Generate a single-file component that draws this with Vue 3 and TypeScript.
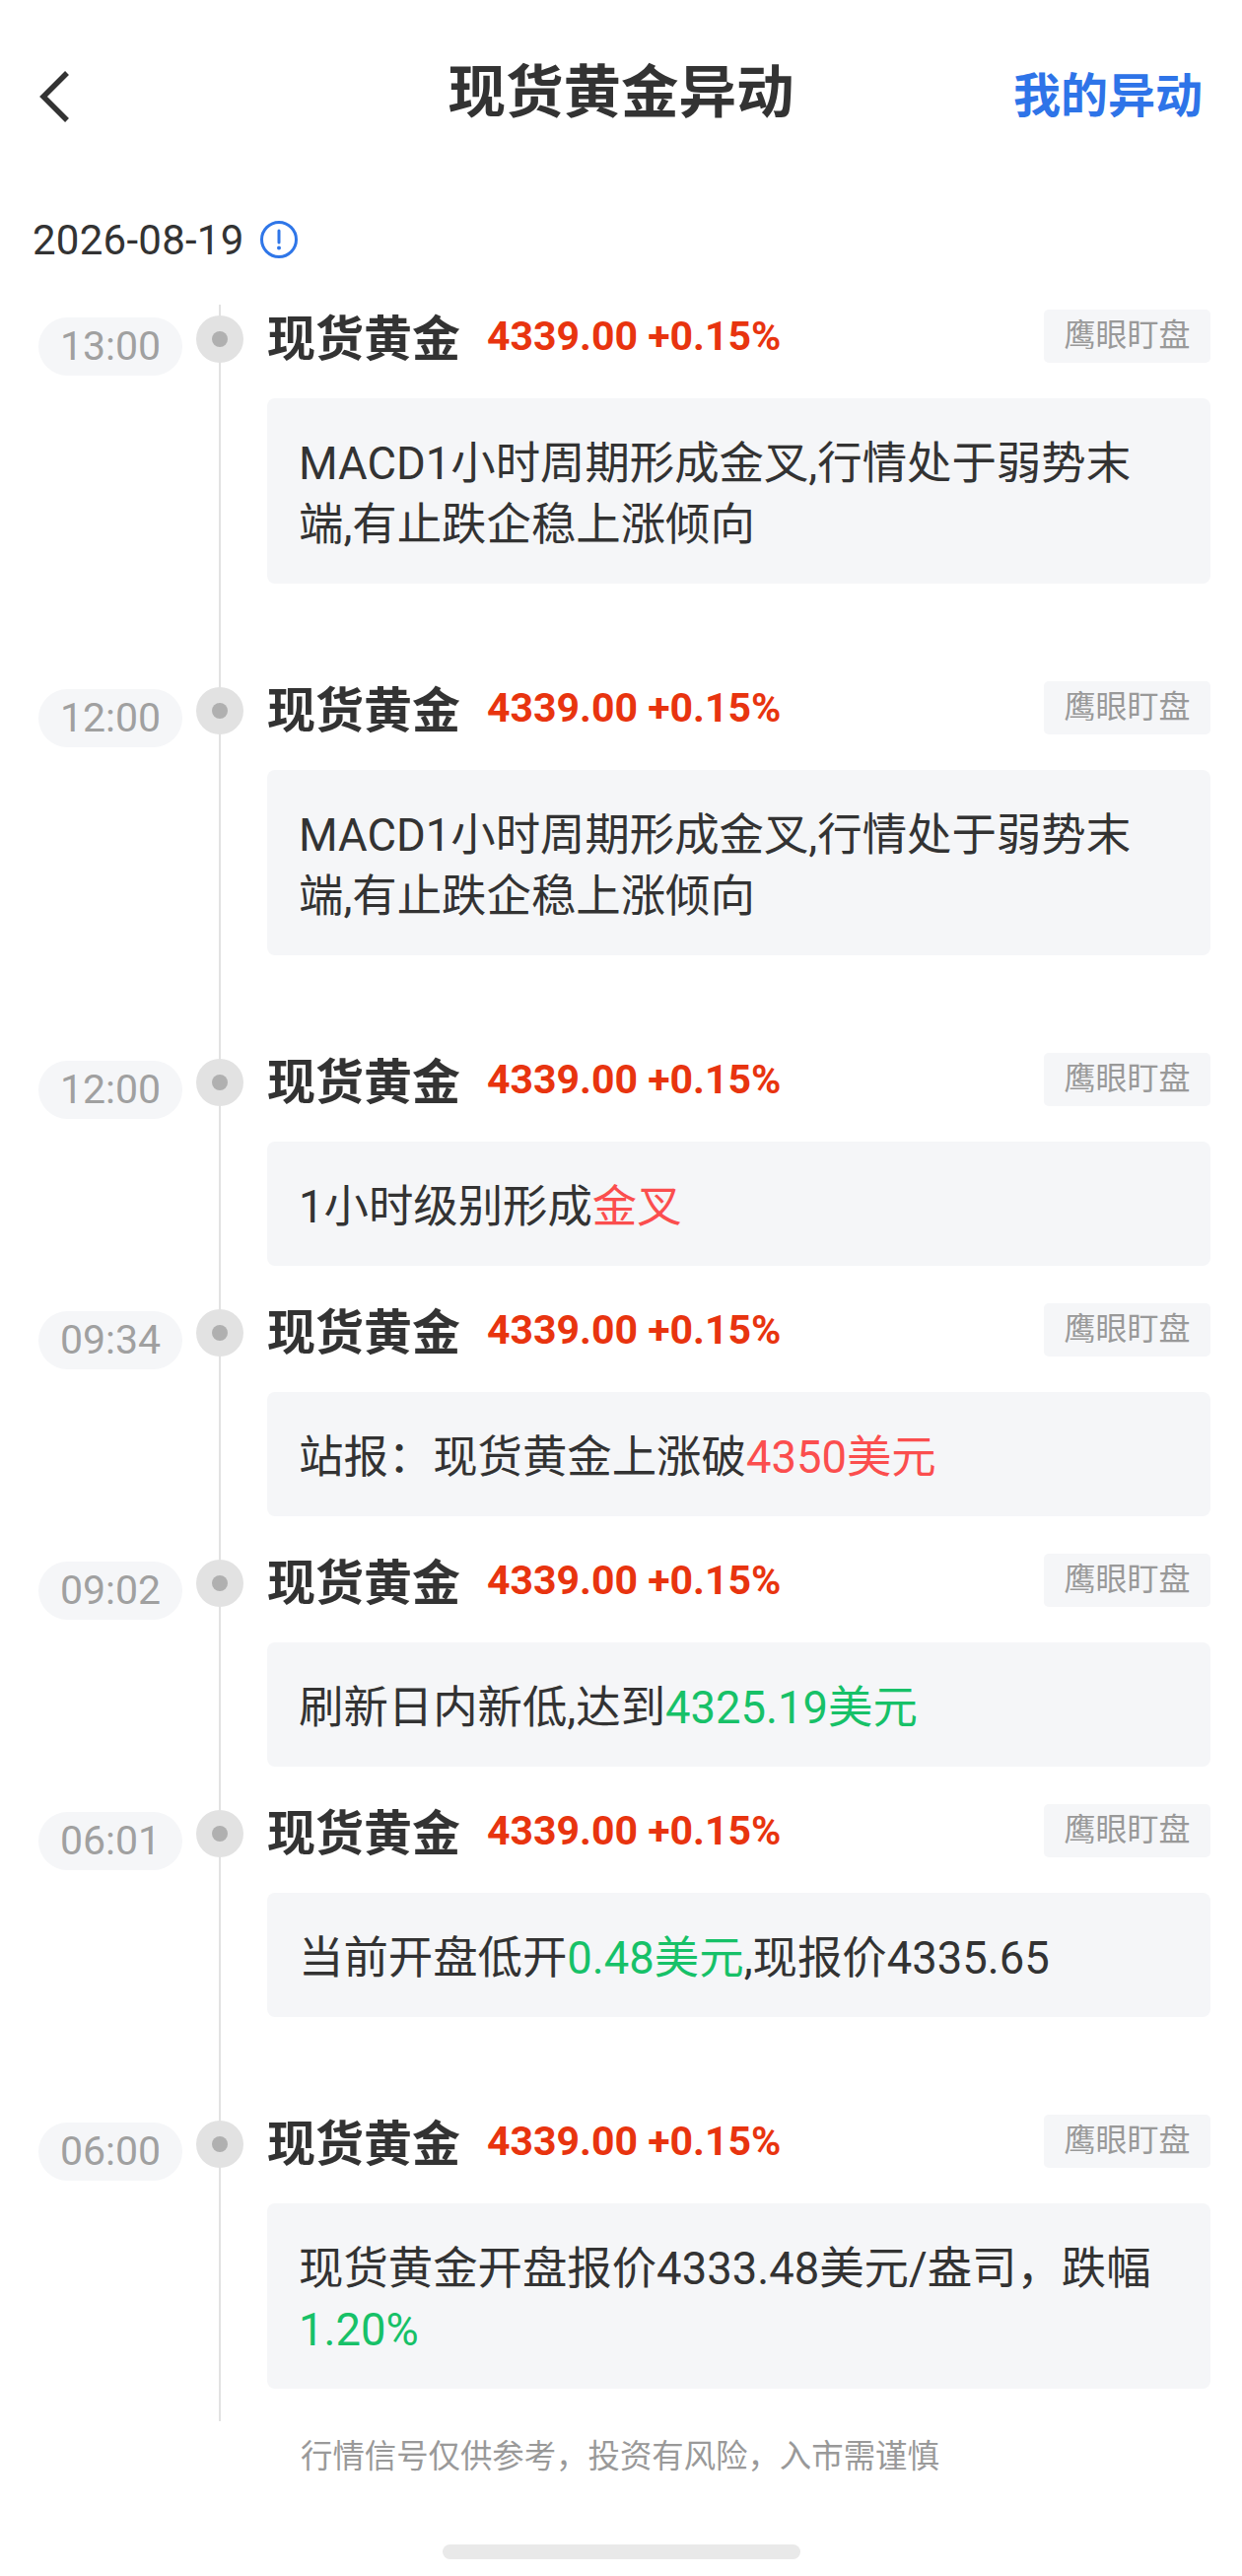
<script setup lang="ts">
interface Seg { t: string; c?: 'up' | 'down' }
interface Item { time: string; segs: Seg[]; wide?: boolean }
const items: Item[] = [
  { time: '13:00', wide: true, segs: [{ t: 'MACD1小时周期形成金叉,行情处于弱势末端,有止跌企稳上涨倾向' }] },
  { time: '12:00', wide: true, segs: [{ t: 'MACD1小时周期形成金叉,行情处于弱势末端,有止跌企稳上涨倾向' }] },
  { time: '12:00', segs: [{ t: '1小时级别形成' }, { t: '金叉', c: 'up' }] },
  { time: '09:34', segs: [{ t: '站报：现货黄金上涨破' }, { t: '4350美元', c: 'up' }] },
  { time: '09:02', segs: [{ t: '刷新日内新低,达到' }, { t: '4325.19美元', c: 'down' }] },
  { time: '06:01', wide: true, segs: [{ t: '当前开盘低开' }, { t: '0.48美元', c: 'down' }, { t: ',现报价4335.65' }] },
  { time: '06:00', segs: [{ t: '现货黄金开盘报价4333.48美元/盎司，跌幅' }, { t: '1.20%', c: 'down' }] },
]
</script>

<template>
  <div class="page">
    <header class="nav">
      <svg class="back" width="34" height="56" viewBox="0 0 34 56">
        <path d="M30 4 L6 28 L30 52" fill="none" stroke="#333" stroke-width="5.5" />
      </svg>
      <h1 class="title">现货黄金异动</h1>
      <a class="mine">我的异动</a>
    </header>
    <div class="date">
      <span>2026-08-19</span>
      <svg width="40" height="40" viewBox="0 0 40 40">
        <circle cx="20" cy="20" r="17.5" fill="none" stroke="#2f76e8" stroke-width="3" />
        <path d="M20 11 V23" stroke="#2f76e8" stroke-width="3" stroke-linecap="round" />
        <circle cx="20" cy="28.5" r="2" fill="#2f76e8" />
      </svg>
    </div>
    <main class="timeline">
      <section v-for="(it, i) in items" :key="i" class="item" :class="{ wide: it.wide }">
        <div class="pill">{{ it.time }}</div>
        <div class="dot"><i></i></div>
        <div class="body">
          <div class="head">
            <span class="name">现货黄金</span>
            <span class="price">4339.00 +0.15%</span>
            <span class="tag">鹰眼盯盘</span>
          </div>
          <p class="card"><span v-for="(s, j) in it.segs" :key="j" :class="s.c">{{ s.t }}</span></p>
        </div>
      </section>
    </main>
    <p class="foot">行情信号仅供参考，投资有风险，入市需谨慎</p>
    <div class="home"></div>
  </div>
</template>

<style scoped>
.page {
  width: 1260px;
  height: 2613px;
  background: #fff;
  color: #333;
  font-family: Roboto, "Noto Sans CJK SC", sans-serif;
  overflow: hidden;
  display: flex;
  flex-direction: column;
}
.nav {
  height: 192px;
  display: grid;
  grid-template-columns: 1fr auto 1fr;
  align-items: center;
  padding: 0 35px;
}
.back { display: block; margin: 3px 0 0 3px; }
.title {
  margin: 0;
  font-size: 58.5px;
  font-weight: 700;
  color: #333;
  line-height: 70px;
  padding-bottom: 4px;
}
.mine {
  justify-self: end;
  font-size: 48px;
  font-weight: 700;
  color: #2e74e8;
  padding: 0 5px 6px 0;
}
.date {
  margin-top: 21px;
  height: 60px;
  padding-left: 33px;
  display: flex;
  align-items: center;
  gap: 15px;
  font-size: 42px;
  letter-spacing: 0.25px;
  color: #333;
}
.date svg { display: block; }
.timeline {
  margin-top: 36px;
  padding: 5px 32px 33px 39px;
  position: relative;
  display: flex;
  flex-direction: column;
  gap: 38px;
}
.timeline::before {
  content: "";
  position: absolute;
  left: 222px;
  top: 0;
  bottom: 0;
  width: 2px;
  background: #e2e2e2;
}
.item {
  display: grid;
  grid-template-columns: 146px 48px 1fr;
  column-gap: 14px;
  align-items: start;
  position: relative;
}
.item.wide { margin-bottom: 61px; }
.pill {
  margin-top: 8px;
  height: 59px;
  line-height: 59px;
  border-radius: 30px;
  background: #f5f6f8;
  color: #a0a0a0;
  font-size: 41px;
  text-align: center;
}
.dot {
  margin-top: 6px;
  width: 48px;
  height: 48px;
  border-radius: 50%;
  background: #e2e2e2;
  display: flex;
  align-items: center;
  justify-content: center;
  position: relative;
}
.dot i {
  width: 16px;
  height: 16px;
  border-radius: 50%;
  background: #b0b0b0;
}
.body { margin-left: 10px; }
.head {
  height: 54px;
  display: flex;
  align-items: center;
}
.name {
  font-size: 49px;
  font-weight: 700;
  color: #333;
  padding-bottom: 4px;
}
.price {
  margin-left: 27px;
  font-size: 41px;
  font-weight: 700;
  color: #e8340f;
  padding-bottom: 1px;
}
.tag {
  margin-left: auto;
  width: 169px;
  height: 54px;
  line-height: 52px;
  text-align: center;
  border-radius: 5px;
  background: #f5f6f8;
  color: #999;
  font-size: 32px;
}
.card {
  margin: 36px 0 0;
  padding: 36px 40px 28px 32px;
  background: #f5f6f8;
  border-radius: 8px;
  font-size: 45.4px;
  line-height: 62px;
  color: #333;
}
.up { color: #fb4e4e; }
.down { color: #17c168; }
.foot {
  margin: 14px 0 0 305px;
  font-size: 32.4px;
  line-height: 44px;
  color: #999;
}
.home {
  margin: 67px 0 0 449px;
  width: 363px;
  height: 15px;
  border-radius: 8px;
  background: #e9e9e9;
}
</style>
